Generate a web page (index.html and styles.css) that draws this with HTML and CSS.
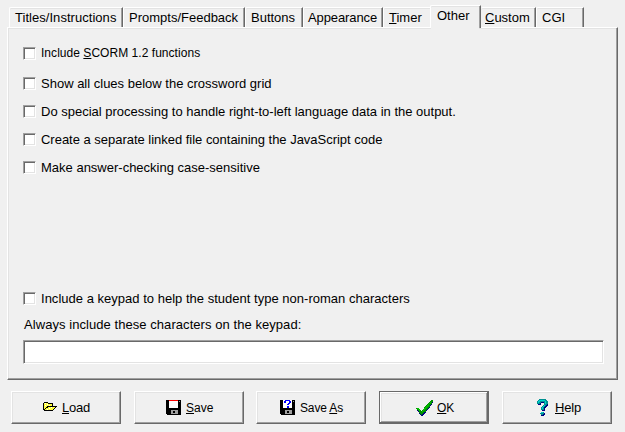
FILE: index.html
```html
<!DOCTYPE html>
<html lang="en">
<head>
<meta charset="utf-8">
<title>Configuration</title>
<link rel="stylesheet" href="styles.css">
</head>
<body>
<div class="tabs">
  <div class="tab titles"><span>Titles/Instructions</span></div>
  <div class="tab prompts"><span>Prompts/Feedback</span></div>
  <div class="tab buttons"><span>Buttons</span></div>
  <div class="tab appearance"><span>Appearance</span></div>
  <div class="tab timer"><span><u>T</u>imer</span></div>
  <div class="tab other active"><span>Other</span></div>
  <div class="tab custom"><span><u>C</u>ustom</span></div>
  <div class="tab cgi"><span>CGI</span></div>
</div>
<main class="panel">
  <label class="option scorm"><i class="box"></i><span>Include <u>S</u>CORM 1.2 functions</span></label>
  <label class="option clues"><i class="box"></i><span>Show all clues below the crossword grid</span></label>
  <label class="option rtl"><i class="box"></i><span>Do special processing to handle right-to-left language data in the output.</span></label>
  <label class="option script"><i class="box"></i><span>Create a separate linked file containing the JavaScript code</span></label>
  <label class="option case"><i class="box"></i><span>Make answer-checking case-sensitive</span></label>
  <label class="option keypad"><i class="box"></i><span>Include a keypad to help the student type non-roman characters</span></label>
  <div class="caption"><span>Always include these characters on the keypad:</span></div>
  <div class="field"></div>
</main>
<footer class="actions">
  <div class="button load">
    <svg width="15" height="11" viewBox="0 0 15 11" shape-rendering="crispEdges">
      <path fill="#000" d="M1 0h4v1h5v3h4v1h-1v1h-1v1h-1v1h-1v1H1V8H0V1h1z"/>
      <path fill="#ffff3c" d="M1 1h4v1h4v2H4v1H3v1H2v1H1zM5 5h7v1h-1v1h-1v1H2V7h1V6h2z"/>
      <path fill="#fff" d="M2 1h1v1H2zM4 2h1v1H4zM2 3h1v1H2zM6 3h1v1H6zM6 6h1v1H6zM8 5h1v1H8zM4 7h1v1H4z"/>
    </svg>
    <span><u>L</u>oad</span>
  </div>
  <div class="button save">
    <svg width="15" height="15" viewBox="0 0 15 15" shape-rendering="crispEdges">
      <path fill="#000" d="M0 0h15v15H1v-1H0z"/>
      <path fill="#fff" d="M3 1h9v7H3z"/><path fill="#f00" d="M3 0h9v1H3z"/>
      <path fill="#a0a0a0" d="M5 10h7v4H5zM13 1h1v1h-1z"/><path fill="#000" d="M7 11h2v2H7z"/>
    </svg>
    <span><u>S</u>ave</span>
  </div>
  <div class="button save-as">
    <svg width="15" height="15" viewBox="0 0 15 15" shape-rendering="crispEdges">
      <path fill="#000" d="M0 0h15v15H1v-1H0z"/>
      <path fill="#fff" d="M3 0h9v8H3z"/>
      <path fill="#a0a0a0" d="M5 10h7v4H5zM13 1h1v1h-1z"/><path fill="#000" d="M7 11h2v2H7z"/>
      <path fill="#00f" d="M5 0h5v1h1v2h-1v1H9v1H7V4h1V3h1V1H6v2H4V1h1zM7 6h2v2H7z"/>
    </svg>
    <span>Save <u>A</u>s</span>
  </div>
  <div class="button ok">
    <svg width="17" height="16" viewBox="0 0 17 16" shape-rendering="crispEdges">
      <path fill="#000080" d="M1 9h3v1h1v2h1v-1h1v-1h1V9h1V8h1V7h1V6h1V5h1V4h1V3h1V1h2v2h-1v2h-1v1h-1v2h-1v1h-1v1h-1v1h-1v2H9v1H8v1H7v1H5v-1H4v-1H3v-2H2v-1H1z"/>
      <path fill="#009000" d="M0 8h3v1h1v1h1v1h1v-1h1V9h1V7h1V6h1V5h1V4h1V3h1V2h1V1h1V0h2v2h-1v2h-1v1h-1v2h-1v1h-1v1h-1v1h-1v2H8v1H7v1H6v1H5v-1H4v-1H3v-2H2v-1H1V9H0z"/>
      <path fill="#00c000" d="M1 8h2v1h1v2H3v-1H2V9H1zM7 9h1V8h1V7h1V6h1V5h1V4h1V3h1V2h1v1h-1v1h-1v2h-1v1h-1v1h-1v1H9v1H8v1H7v1H6v-1h1z"/>
    </svg>
    <span><u>O</u>K</span>
  </div>
  <div class="button help">
    <svg width="12" height="17" viewBox="0 0 12 17" shape-rendering="crispEdges">
      <path fill="#000080" d="M3 1h7v1h1v5h-1v1H9v1H8v3H5v-1h1V8h1V7h1V4H4v2H1V4h2zM5 14h3v2H7v1H4v-1h1z"/>
      <path fill="#009090" d="M2 0h7v1h1v1h1v3h-1v1H9v1H8v1H7v3H4V8h1V7h1V6h1V3H4v1H3v1H0V2h1V1h1zM4 13h3v2H6v1H4v-1H3v-1h1z"/>
      <path fill="#00d0d0" d="M2 1h6v1H3v1H2v1H1V2h1zM8 2h1v3H8zM7 6h1v1H7zM6 7h1v1H6zM5 8h1v2H5zM4 13h2v1H4z"/>
    </svg>
    <span><u>H</u>elp</span>
  </div>
</footer>
</body>
</html>
```
FILE: styles.css
```css
* { box-sizing: border-box; }
body {
  margin: 0;
  width: 625px;
  height: 432px;
  overflow: hidden;
  background: #f0f0f0;
  color: #000;
  font: 13px/16px "Liberation Sans", Arial, sans-serif;
  white-space: nowrap;
}
u { text-decoration: underline; text-decoration-thickness: 1px; text-underline-offset: 1px; }

.tabs { display: flex; align-items: flex-end; height: 27px; padding-left: 9px; }
.tab {
  height: 20px;
  padding: 2px 0 0 5px;
  border-top: 1px solid #fff;
  border-left: 1px solid #fff;
  border-right: 1px solid #696969;
  border-top-left-radius: 2px;
  box-shadow: inset -1px 0 #a0a0a0, inset 0 1px #e3e3e3;
}
.titles { width: 114px; letter-spacing: 0.04px; }
.prompts { width: 122px; }
.buttons { width: 58px; }
.appearance { width: 80px; padding-left: 4px; letter-spacing: -0.1px; }
.timer { width: 47px; border-right: 0; box-shadow: inset 0 1px #e3e3e3; }
.other { width: 51px; }
.custom { width: 55px; padding-left: 4px; border-left: 0; }
.cgi { width: 48px; }
.tab.active {
  position: relative;
  height: 23px;
  margin-bottom: -1px;
  padding: 2px 0 0 6px;
  background: #f0f0f0;
}
.tab.active::after {
  content: "";
  position: absolute;
  left: 0;
  right: 1px;
  bottom: -1px;
  height: 1px;
  background: #f0f0f0;
}

.panel {
  width: 611px;
  height: 353px;
  margin-left: 7px;
  padding: 15px 12px 0 14px;
  border: 1px solid;
  border-color: #fff #696969 #696969 #fff;
  box-shadow: inset -1px -1px #a0a0a0, inset 1px 1px #e3e3e3;
}
.option { display: flex; align-items: center; gap: 5px; height: 20px; padding-left: 1px; }
.option span { padding-top: 2px; }
.scorm { font-size: 12px; }
.scorm span { padding-top: 0; letter-spacing: 0.04px; }
.clues { margin-top: 10px; }
.rtl, .script, .case { margin-top: 8px; }
.script { letter-spacing: -0.02px; }
.keypad { margin-top: 111px; letter-spacing: 0.015px; }
.box, .field {
  background: #fff;
  border: 1px solid;
  border-color: #a0a0a0 #fff #fff #a0a0a0;
  box-shadow: inset 1px 1px #696969, inset -1px -1px #e3e3e3;
}
.box { width: 13px; height: 13px; }
.caption { margin: 9px 0 0 2px; letter-spacing: 0.06px; }
.field { width: 581px; height: 24px; margin: 7px 0 0 1px; }

.actions { display: grid; grid-template-columns: 123px 122px 123px 123px 110px; padding: 11px 0 0 11px; }
.button {
  display: flex;
  align-items: center;
  width: 110px;
  height: 33px;
  border: 1px solid;
  border-color: #fff #696969 #696969 #fff;
  box-shadow: inset -1px -1px #a0a0a0, inset 1px 1px #e3e3e3;
}
.load { padding-left: 31px; gap: 4px; letter-spacing: -0.2px; }
.save { padding-left: 31px; gap: 5px; font-size: 12px; }
.save-as { padding-left: 23px; gap: 5px; font-size: 12px; letter-spacing: -0.15px; }
.ok {
  padding-left: 36px;
  gap: 4px;
  font-size: 12px;
  border-color: #696969;
  box-shadow: inset -1px -1px #696969, inset 1px 1px #fff, inset -2px -2px #a0a0a0, inset 2px 2px #e3e3e3;
}
.help { padding-left: 34px; gap: 6px; letter-spacing: -0.2px; }
```
